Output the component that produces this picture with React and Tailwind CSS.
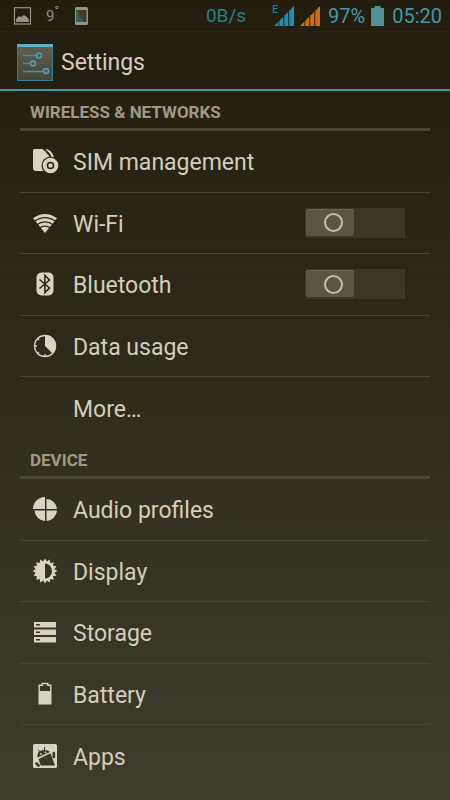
import React from "react";

const INK = "#d9d4bf";

function SimIcon() {
  return (
    <svg width="28" height="28" viewBox="0 0 28 28">
      <path d="M3 2h9l7 8v6l-6 8H5a3 3 0 0 1-3-3V4a2 2 0 0 1 1-2z" fill={INK} />
      <path d="M15 3q6 2 7 9" fill="none" stroke={INK} strokeWidth="2.500" />
      <path d="M12 2q7 3 8 9" fill="none" stroke="#292413" strokeWidth="1.300" />
      <circle cx="19.500" cy="18.500" r="9" fill="#292413" />
      <circle cx="19.500" cy="18.500" r="5.800" fill="none" stroke={INK} strokeWidth="4" />
      <circle cx="19.500" cy="18.500" r="2.200" fill={INK} />
    </svg>
  );
}

function WifiIcon() {
  return (
    <svg width="28" height="28" viewBox="0 0 28 28">
      <path d="M2 9.300Q14 .7 26 9.300L14 24z" fill={INK} />
      <path d="M3 12.600Q14 4.800 25 12.600M5.500 16Q14 9.800 22.500 16M8 19.400Q14 15 20 19.400" fill="none" stroke="#2b2616" strokeWidth="1.300" />
    </svg>
  );
}

function BluetoothIcon() {
  return (
    <svg width="28" height="28" viewBox="0 0 28 28">
      <rect x="5.500" y="2.500" width="17" height="23" rx="5" fill={INK} />
      <path d="M8.500 9.500l10 8.500-4.600 4.500v-17l4.600 4.500-10 8.500" fill="none" stroke="#2e2a1a" strokeWidth="1.600" />
    </svg>
  );
}

function DataIcon() {
  return (
    <svg width="28" height="28" viewBox="0 0 28 28">
      <circle cx="14" cy="14" r="10.500" fill="none" stroke={INK} strokeWidth="1.300" />
      <path d="M14 14V3a11 11 0 0 1 7.800 18.800z" fill={INK} />
      <path d="M3 14h3M14 25v-3M6.500 6.500l1.500 1.500M6.500 21.500L8 20" stroke={INK} strokeWidth="1.300" />
    </svg>
  );
}

function AudioIcon() {
  return (
    <svg width="28" height="28" viewBox="0 0 28 28">
      <path d="M14 14H2A12 12 0 0 1 14 2zM15.500 14V4A10.500 10.500 0 0 1 26 14zM14 15.500V26A11 11 0 0 1 3.500 15.500zM15.500 15.500H26A11 11 0 0 1 15.500 26z" fill={INK} />
    </svg>
  );
}

const SUN_POINTS = Array.from({ length: 32 }, (_, i) => {
  const r = i % 2 ? 9.6 : 12.4;
  const a = (i * Math.PI) / 16;
  return `${14 + r * Math.sin(a)},${14 - r * Math.cos(a)}`;
}).join(" ");

function DisplayIcon() {
  return (
    <svg width="28" height="28" viewBox="0 0 28 28">
      <polygon points={SUN_POINTS} fill={INK} />
      <path d="M14 6.500a7 7.500 0 0 1 0 15z" fill="#353223" />
    </svg>
  );
}

function StorageIcon() {
  return (
    <svg width="28" height="28" viewBox="0 0 28 28">
      <path d="M3 4h22v5.500H3zM3 11.500h22V17H3zM3 19h22v5.500H3z" fill={INK} />
      <path d="M5 6.800h4M5 14.300h4M5 21.800h4" stroke="#3a3728" strokeWidth="1.500" />
    </svg>
  );
}

function BatteryIcon() {
  return (
    <svg width="28" height="28" viewBox="0 0 28 28">
      <path d="M8.200 5.200h3V3.500h5.600v1.700h3v18.600H8.200z" fill="none" stroke={INK} strokeWidth="1.400" />
      <path d="M8 11h12v13H8z" fill={INK} />
    </svg>
  );
}

function AppsIcon() {
  return (
    <svg width="28" height="28" viewBox="0 0 28 28">
      <rect x="2" y="2" width="24" height="24" rx="1.500" fill={INK} />
      <g fill="#3a3829" stroke="#3a3829" strokeLinecap="round">
        <path d="M6.500 15.500Q5.500 9.500 11 8.300T19 10z" strokeWidth="0" />
        <path d="M7.500 17L19.500 11.300l4.500 12.200H9.800z" strokeWidth="0" />
        <path d="M8.500 9.500L7.500 8M13.500 8.500V5.500" fill="none" strokeWidth="1" />
        <path d="M22.800 11v4M5.500 21.500l2 2" fill="none" strokeWidth="2.600" />
      </g>
      <circle cx="10" cy="12" r="0.900" fill={INK} />
      <circle cx="14.500" cy="10.300" r="0.900" fill={INK} />
    </svg>
  );
}

function SettingsLogo() {
  return (
    <svg width="36" height="37" viewBox="0 0 36 37" className="shrink-0">
      <defs>
        <linearGradient id="tile" x1="0" y1="0" x2="0" y2="1">
          <stop offset="0" stopColor="#625f4e" />
          <stop offset="1" stopColor="#474536" />
        </linearGradient>
      </defs>
      <rect x="0.500" y="0.500" width="35" height="36" fill="url(#tile)" stroke="#357b91" />
      <path d="M0 1.500h36" stroke="#5fb0c3" strokeWidth="3" />
      <path d="M21 11.500h10M15 19.500h16" stroke="#42606a" strokeWidth="1.500" />
      <path d="M6 11.500h13M6 19.500h7M6 27.500h20" stroke="#3f93ac" strokeWidth="1.500" />
      <g fill="#4e5c55" stroke="#4b9fb8" strokeWidth="1.600">
        <circle cx="22" cy="11.500" r="2.500" />
        <circle cx="16" cy="19.500" r="2.500" />
        <circle cx="29" cy="27" r="2.500" />
      </g>
    </svg>
  );
}

function Signal({ color }) {
  return (
    <svg width="20" height="20" viewBox="0 0 20 20">
      <path d="M0 20l4.500-4.500V20zM5.300 20v-5.300l4-4V20zM10.300 20V9.700l4-4V20zM15.300 20V4.700L20 0v20z" fill={color} />
    </svg>
  );
}

function StatusBar() {
  return (
    <div className="flex h-8 items-center justify-between border-b border-[#2a2415] pl-3 pr-2 text-[20px] leading-6 text-[#4299ab]">
      <div className="flex items-center text-[#98927d]">
        <svg width="20" height="18" viewBox="0 0 20 18">
          <rect x="2.500" y="0.700" width="16" height="16.300" fill="none" stroke="currentColor" strokeWidth="1.200" />
          <path d="M4 15v-3l3-3 2 1 3-2 3 2 2 3v2z" fill="currentColor" />
        </svg>
        <span className="ml-3.5 text-[15px]">9<sup className="text-[12px]">°</sup></span>
        <svg width="14" height="18" viewBox="0 0 14 18" className="ml-4">
          <rect width="13" height="18" rx="1.500" fill="#98927d" />
          <path d="M1.500 3h10v12h-10z" fill="#3c3e2f" />
          <path d="M1.500 3l7 12h-7z" fill="#27625d" />
        </svg>
      </div>
      <div className="flex items-center">
        <span className="mr-7 text-[19px] text-[#287d88]">0B/s</span>
        <div className="relative mr-1.5">
          <span className="absolute -left-0.5 -top-0.5 text-[11px] leading-3 text-[#238ba8]">E</span>
          <Signal color="#238cb1" />
        </div>
        <Signal color="#d36b14" />
        <span className="ml-2">97%</span>
        <svg width="13" height="20" viewBox="0 0 13 20" className="ml-1.5 mr-2">
          <path d="M0 2h3.500V0h6v2H13v18H0z" fill="#519299" />
        </svg>
        <span>05:20</span>
      </div>
    </div>
  );
}

function Toggle({ id }) {
  return (
    <span className="relative mr-[25px] flex h-[30px] w-[100px] bg-[#3b3726] p-px">
      <input id={id} type="checkbox" role="switch" className="peer absolute inset-0 m-0 h-full w-full cursor-pointer opacity-0" />
      <span className="pointer-events-none flex h-[27px] w-12 items-center justify-end rounded-xs border-t border-[#69654f] bg-[#595641] pr-[11px] peer-checked:translate-x-[50px]">
        <span className="h-[19px] w-[19px] rounded-full border-2 border-[#c5bfab]" />
      </span>
    </span>
  );
}

function Row({ label, icon: Icon, toggle }) {
  const id = label.toLowerCase();
  return (
    <li className="flex items-center border-b border-[#48442f] pl-[11px] last:border-b-0">
      <span className="mr-3.5 flex w-7 shrink-0 justify-center">{Icon && <Icon />}</span>
      {toggle ? (
        <>
          <label htmlFor={id} className="flex-1 pt-1">{label}</label>
          <Toggle id={id} />
        </>
      ) : (
        <button type="button" className="flex-1 pt-1 text-left">{label}</button>
      )}
    </li>
  );
}

function Section({ title, rows }) {
  return (
    <section>
      <h2 className="flex h-10 items-center border-b-3 border-[#4a4735] pl-2.5 pt-1 text-[17px] font-bold leading-5 text-[#a09a83]">
        {title}
      </h2>
      <ul className="grid min-h-[308px] auto-rows-fr text-[23px] leading-7">
        {rows.map((row) => (
          <Row key={row.label} {...row} />
        ))}
      </ul>
    </section>
  );
}

const WIRELESS = [
  { label: "SIM management", icon: SimIcon },
  { label: "Wi-Fi", icon: WifiIcon, toggle: true },
  { label: "Bluetooth", icon: BluetoothIcon, toggle: true },
  { label: "Data usage", icon: DataIcon },
  { label: "More…" },
];

const DEVICE = [
  { label: "Audio profiles", icon: AudioIcon },
  { label: "Display", icon: DisplayIcon },
  { label: "Storage", icon: StorageIcon },
  { label: "Battery", icon: BatteryIcon },
  { label: "Apps", icon: AppsIcon },
];

export default function App() {
  return (
    <div className="min-h-screen bg-linear-to-b from-[#221d0d] to-[#3e3d2d] font-[Roboto,sans-serif] text-[#d4ceba]">
      <StatusBar />
      <header className="flex h-[59px] items-center gap-2 border-b-2 border-[#3f95ac] bg-[#231f10] pl-[17px] pt-1">
        <SettingsLogo />
        <h1 className="text-[23px] leading-7">Settings</h1>
      </header>
      <main className="px-5">
        <Section title="WIRELESS & NETWORKS" rows={WIRELESS} />
        <Section title="DEVICE" rows={DEVICE} />
      </main>
    </div>
  );
}
